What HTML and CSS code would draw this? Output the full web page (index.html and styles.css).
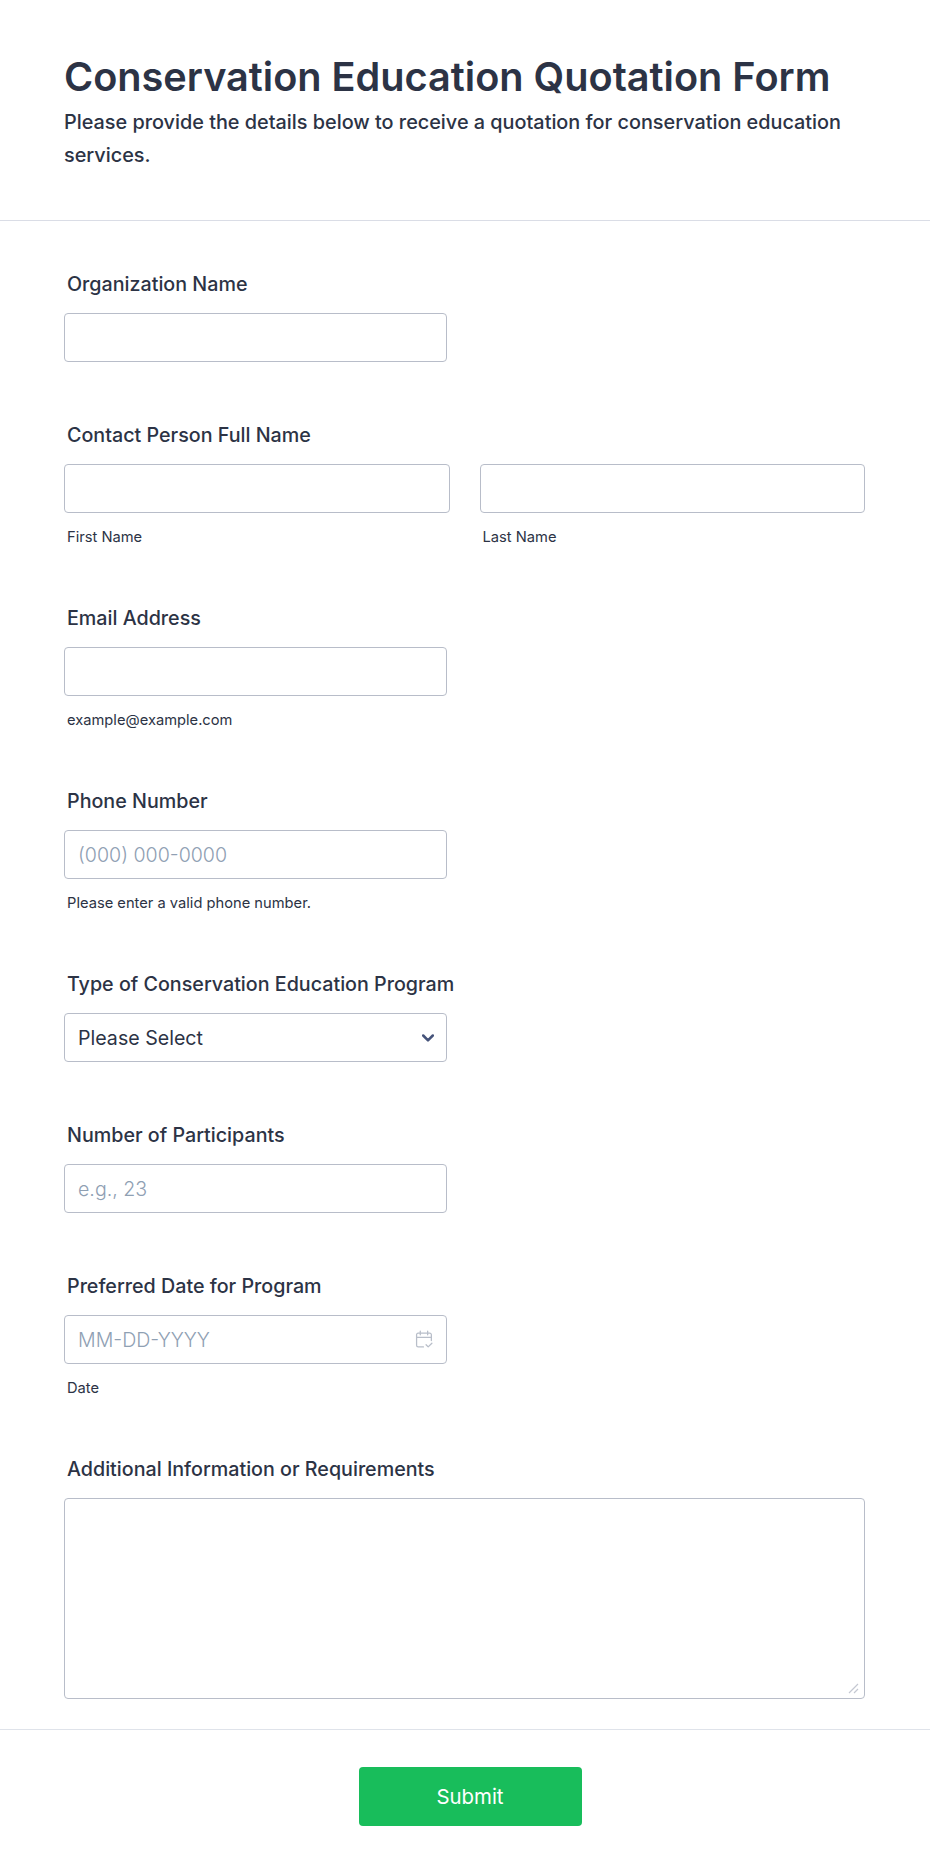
FILE: index.html
```html
<!DOCTYPE html>
<html lang="en">
<head>
<meta charset="utf-8">
<title>Conservation Education Quotation Form</title>
<link rel="stylesheet" href="styles.css">
</head>
<body>
<form class="form">
  <header class="form-header">
    <h1 class="form-title">Conservation Education Quotation Form</h1>
    <p class="form-subtitle">Please provide the details below to receive a quotation for conservation education services.</p>
  </header>
  <div class="form-body">
    <div class="field">
      <label class="field-label">Organization Name</label>
      <input class="control control-half" type="text">
    </div>
    <div class="field">
      <label class="field-label">Contact Person Full Name</label>
      <div class="name-row">
        <div class="name-col"><input class="control" type="text"><span class="sublabel">First Name</span></div>
        <div class="name-col"><input class="control" type="text"><span class="sublabel">Last Name</span></div>
      </div>
    </div>
    <div class="field">
      <label class="field-label">Email Address</label>
      <input class="control control-half" type="text">
      <span class="sublabel">example@example.com</span>
    </div>
    <div class="field">
      <label class="field-label">Phone Number</label>
      <input class="control control-half" type="text" placeholder="(000) 000-0000">
      <span class="sublabel">Please enter a valid phone number.</span>
    </div>
    <div class="field">
      <label class="field-label">Type of Conservation Education Program</label>
      <div class="control control-half select-box">
        <span>Please Select</span>
        <svg class="chevron" width="12" height="8" viewBox="0 0 12 8"><path d="M1.200 1.500 6 6.300l4.800-4.800" fill="none" stroke="#45537a" stroke-width="2.500" stroke-linecap="round" stroke-linejoin="round"/></svg>
      </div>
    </div>
    <div class="field">
      <label class="field-label">Number of Participants</label>
      <input class="control control-half" type="text" placeholder="e.g., 23">
    </div>
    <div class="field">
      <label class="field-label">Preferred Date for Program</label>
      <div class="control control-half date-box">
        <span class="date-placeholder">MM-DD-YYYY</span>
        <svg class="calendar" width="19" height="19" viewBox="0 0 18 18" fill="none" stroke="#b8bec9" stroke-width="1.200" stroke-linecap="round" stroke-linejoin="round"><path d="M8 16H3a1.500 1.500 0 0 1-1.500-1.500v-10A1.500 1.500 0 0 1 3 3h11a1.500 1.500 0 0 1 1.500 1.500V10"/><path d="M1.500 7h14M5 1v3.500M12 1v3.500M10.500 14l2 2 3.500-3.500"/></svg>
      </div>
      <span class="sublabel">Date</span>
    </div>
    <div class="field field-last">
      <label class="field-label">Additional Information or Requirements</label>
      <div class="area-wrap">
        <textarea class="control control-area"></textarea>
        <svg class="grip" width="11" height="11" viewBox="0 0 11 11"><path d="M1 10 10 1M6 10l4-4" fill="none" stroke="#c4c8d2" stroke-width="1.200"/></svg>
      </div>
    </div>
  </div>
  <footer class="form-footer">
    <button class="submit" type="button">Submit</button>
  </footer>
</form>
</body>
</html>
```
FILE: styles.css
```css
* { box-sizing: border-box; }
html, body { margin: 0; padding: 0; background: #fff; }
body { font-family: Inter, "Liberation Sans", sans-serif; color: #2c3345; }
.form { width: 930px; }
.form-header { padding: 53px 64px 0; height: 221px; border-bottom: 1px solid #dadde6; }
.form-title { margin: 0 0 5px; font-size: 39.650px; line-height: 48px; font-weight: 600; color: #2c3345; }
.form-subtitle { margin: 0; font-size: 19.830px; line-height: 33px; font-weight: 500; color: #2c3345; }
.form-body { padding: 0 64px; }
.field { padding-top: 50px; padding-bottom: 10px; display: flex; flex-direction: column; align-items: flex-start; }
.field-last { padding-bottom: 0; }
.field-label { font-size: 19.700px; line-height: 26px; font-weight: 500; padding-left: 3px; margin-bottom: 16px; color: #2c3345; }
.control { display: block; width: 100%; height: 49px; border: 1px solid #b8bdc9; border-radius: 4px; background: #fff; font-family: inherit; font-size: 19.600px; color: #2c3345; padding: 0 13px; outline: none; }
.control::placeholder { color: #8fa0b3; opacity: 1; font-weight: 300; }
.control-half { width: 383px; }
.sublabel { display: block; font-size: 14.700px; line-height: 16px; padding: 16px 0 0 3px; color: #2c3345; }
.name-row { display: flex; gap: 30px; width: 801px; }
.name-col { flex: 1; }
.select-box, .date-box { display: flex; align-items: center; justify-content: space-between; }
.chevron, .calendar { margin-right: -1px; }
.date-placeholder { color: #8fa0b3; font-weight: 300; }
.area-wrap { position: relative; width: 801px; }
.control-area { width: 100%; height: 201px; resize: none; padding: 10px 13px; }
.grip { position: absolute; right: 6px; bottom: 5px; }
.form-footer { margin-top: 30px; border-top: 1px solid #dfe3ea; padding-top: 37px; height: 146px; display: flex; justify-content: center; align-items: flex-start; }
.submit { width: 223px; height: 59px; margin-left: 10px; border: 0; border-radius: 4px; background: #18bd5b; color: #fff; font-family: inherit; font-size: 20.400px; font-weight: 400; }
```
